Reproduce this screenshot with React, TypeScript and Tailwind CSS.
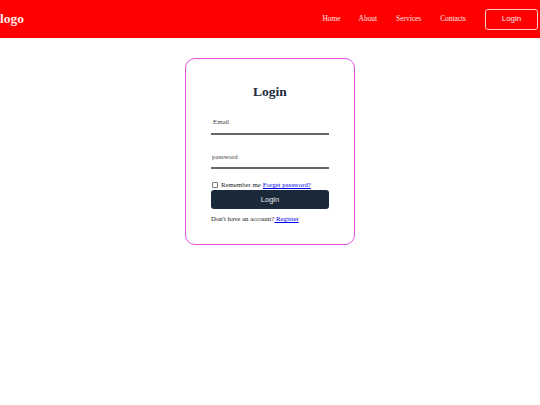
import React from "react";

export default function App() {
  const serif = { fontFamily: '"Liberation Serif", "Times New Roman", serif' };
  return (
    <div className="w-[540px] h-[405px] bg-white" style={serif}>
      <header className="h-[38px] bg-[#ff0000] flex items-center justify-between pr-[2px]">
        <div className="text-[13.5px] font-bold text-white/90 leading-none">logo</div>
        <nav className="flex items-center">
          <a className="text-[7.4px] text-white/90 mr-[18px]">Home</a>
          <a className="text-[7.4px] text-white/90 mr-[19px]">About</a>
          <a className="text-[7.4px] text-white/90 mr-[19px]">Services</a>
          <a className="text-[7.4px] text-white/90 mr-[19px]">Contacts</a>
          <button
            className="w-[53px] h-[21px] border border-white/80 rounded-[3px] text-[8px] font-normal text-white/90 flex items-center justify-center"
            style={{ fontFamily: '"Liberation Sans", Arial, sans-serif' }}
          >
            Login
          </button>
        </nav>
      </header>
      <main className="flex justify-center pt-[20px]">
        <div className="w-[170px] h-[187px] border border-[#e052dc] rounded-[10px] px-[25px] pt-[24px]">
          <h2 className="text-[13.5px] font-bold text-[#1e2b3b] text-center leading-[18px]">Login</h2>
          <div className="mt-[18px] h-[16px] border-b-2 border-[#666] flex items-end pb-[7px] pl-[2px]">
            <span className="text-[6.8px] text-[#444] leading-none">Email</span>
          </div>
          <div className="mt-[18px] h-[16px] border-b-2 border-[#666] flex items-end pb-[6px] pl-[1px]">
            <span className="text-[6.8px] text-[#444] leading-none">password</span>
          </div>
          <div className="mt-[11px] h-[9px] flex items-center text-[6.8px] leading-[9px] text-[#222] pl-[1px]">
            <span className="inline-block w-[6px] h-[6px] border border-[#777] rounded-[1px] mr-[3px]" />
            <span>Remember me</span>
            <a className="ml-[2px] text-[#0000ee] underline">Forget password?</a>
          </div>
          <button
            className="mt-[1px] w-full h-[19px] bg-[#1b2a3a] rounded-[3px] text-white/90 text-[7.5px] font-normal flex items-center justify-center"
            style={{ fontFamily: '"Liberation Sans", Arial, sans-serif' }}
          >
            Login
          </button>
          <div className="mt-[5px] text-[6.8px] leading-[9px] text-[#222]">
            Don't have an account?<a className="text-[#0000ee] underline"> Register</a>
          </div>
        </div>
      </main>
    </div>
  );
}
